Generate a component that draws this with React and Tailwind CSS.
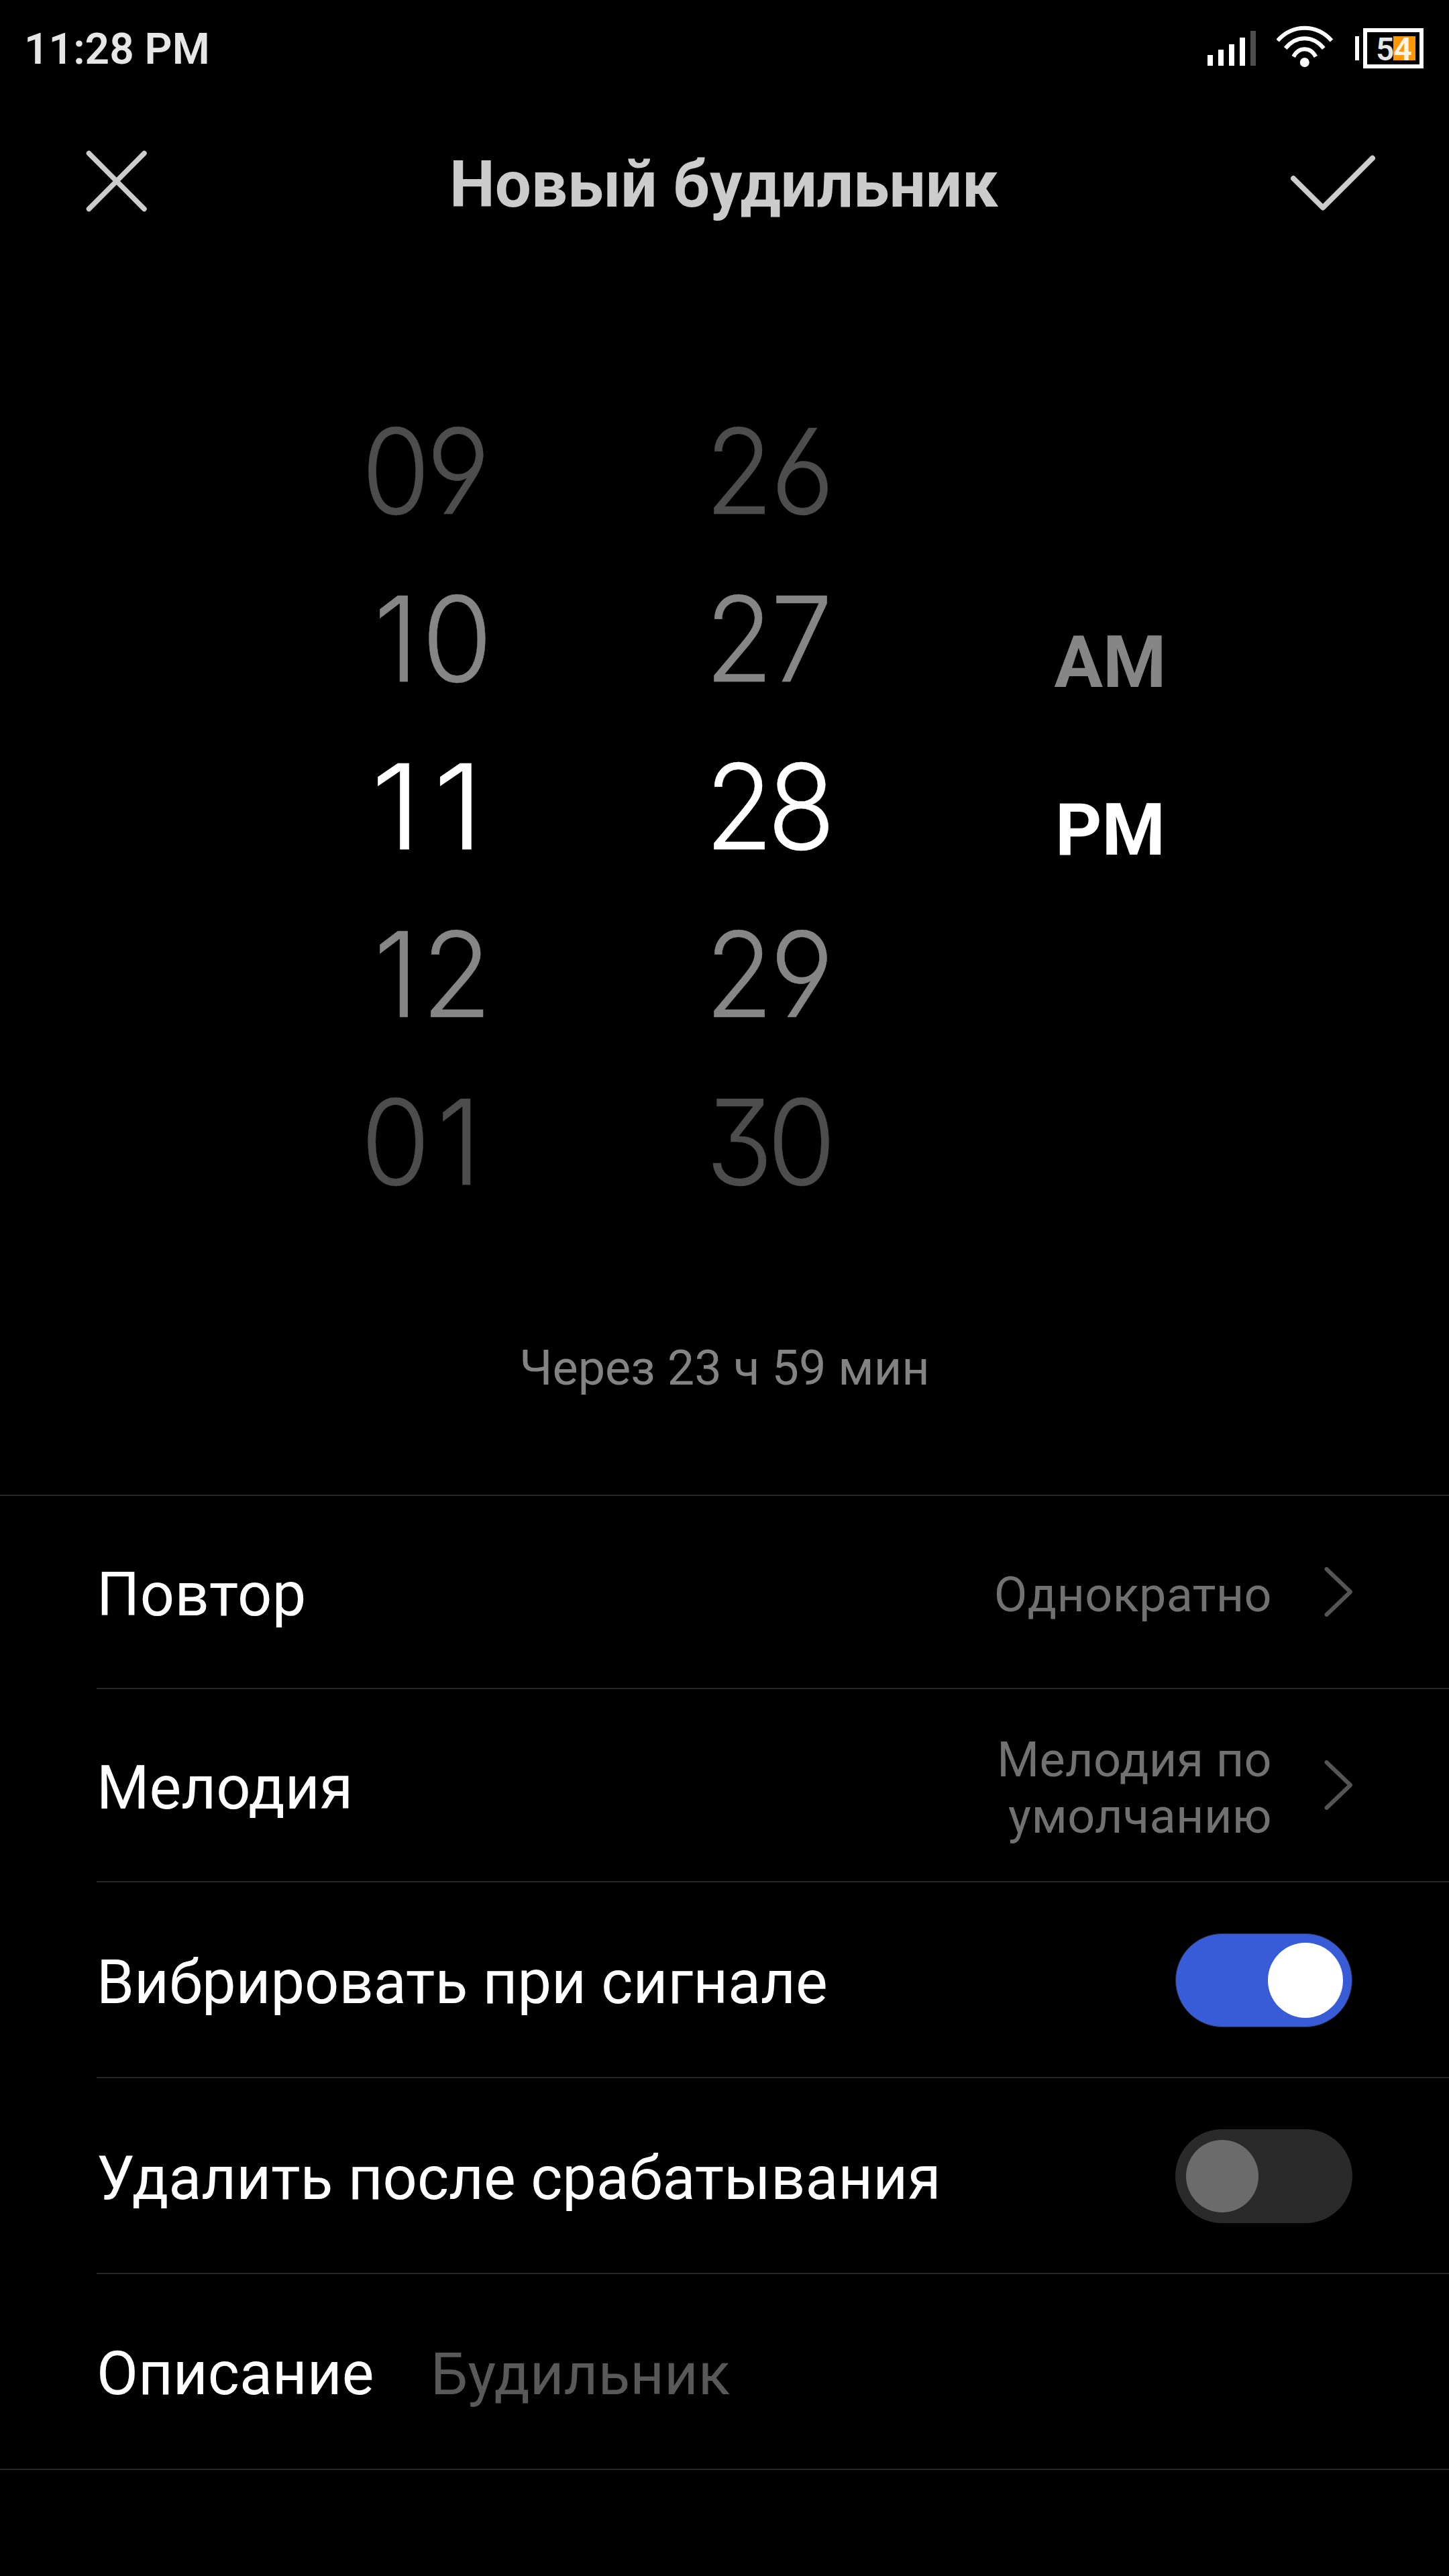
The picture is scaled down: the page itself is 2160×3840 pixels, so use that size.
// Wheel entries: value, colour by distance from the selection, and per-pair spacing.
const HOURS = [
  { value: "09", style: "text-[#4d4d4d] ml-[158.3px] scale-x-[0.94] tracking-[-6px]" },
  { value: "10", style: "text-[#868686] ml-[176px] scale-x-[0.97] tracking-[4.8px]" },
  { value: "11", style: "text-white ml-[171.5px] scale-x-[1.08] tracking-[16.6px]" },
  { value: "12", style: "text-[#868686] ml-[176px] scale-x-[0.97] tracking-[4.5px]" },
  { value: "01", style: "text-[#4d4d4d] ml-[157.2px] scale-x-[0.95] tracking-[10.4px]" },
];

const MINUTES = [
  { value: "26", style: "text-[#4d4d4d] ml-[157.7px] scale-x-[0.94] tracking-[-4px]" },
  { value: "27", style: "text-[#868686] ml-[157.7px] scale-x-[0.94] tracking-[-4px]" },
  { value: "28", style: "text-white ml-[157.7px] scale-x-[0.94] tracking-[-9px]" },
  { value: "29", style: "text-[#868686] ml-[157.7px] scale-x-[0.94] tracking-[-5px]" },
  { value: "30", style: "text-[#4d4d4d] ml-[158.6px] scale-x-[0.94] tracking-[-9.5px]" },
];

function StatusBar() {
  return (
    <div className="flex h-36 items-center justify-between pr-[38px] pl-9">
      <span className="pt-1 text-[64px] leading-none font-semibold text-[#e6e6e6]">11:28 PM</span>
      <div className="flex items-center">
        <svg className="h-36 w-[72px]" viewBox="0 0 72 144" fill="#fff">
          <rect x="0" y="82" width="8" height="16" />
          <rect x="16" y="74" width="8" height="24" />
          <rect x="32" y="66" width="8" height="32" />
          <rect x="48" y="56" width="8" height="42" />
          <rect x="64" y="46" width="8" height="52" fill="#4d4d4d" />
        </svg>
        <svg
          className="mr-[33px] ml-[31px] h-36 w-[84px]"
          viewBox="0 0 84 144"
          fill="none"
          stroke="#fff"
          strokeWidth="6"
        >
          <path d="M1.5 60.5 C24 35.5 59.5 35.5 82 60.5" />
          <path d="M13.2 72 C29.5 52.3 54 52.3 70.3 72" />
          <path d="M25.2 84.5 C33 69.5 50.5 69.5 58.3 84.5" />
          <circle cx="41.8" cy="93" r="7" fill="#fff" stroke="none" />
        </svg>
        <div className="flex items-center gap-1.5">
          <div className="h-9 w-1.5 bg-white" />
          <div className="flex h-[60px] w-[90px] items-center border-6 border-white">
            <div className="relative flex h-9 w-[72px] items-center justify-end">
              <div className="h-9 w-[33px] bg-[#ff9800]" />
              <span className="absolute top-0 left-[13px] pt-[2px] text-[48px] leading-9 font-semibold tracking-[-1px] text-white/90">
                54
              </span>
            </div>
          </div>
        </div>
      </div>
    </div>
  );
}

function Header() {
  return (
    <div className="grid h-[252px] grid-cols-[220px_1fr_236px] items-center">
      <svg
        className="ml-[128px] h-[92px] w-[92px]"
        viewBox="0 0 92 92"
        fill="none"
        stroke="#ccc"
        strokeWidth="7.5"
        strokeLinecap="round"
      >
        <path d="M4.5 4.5 L87 87.5 M87 4.5 L4.5 87.5" />
      </svg>
      <h1 className="pt-2.5 pl-[14px] text-center text-[96px] leading-none font-bold tracking-[-0.1px] text-[#ccc]">
        Новый будильник
      </h1>
      <svg
        className="h-[92px] w-[130px]"
        viewBox="0 0 130 92"
        fill="none"
        stroke="#ccc"
        strokeWidth="8"
        strokeLinecap="round"
        strokeLinejoin="round"
      >
        <path d="M4 42 L48 85.5 L122 11.7" />
      </svg>
    </div>
  );
}

function Wheel({ items }) {
  return (
    <div className="flex flex-col">
      {items.map(({ value, style }) => (
        <div key={value} className="flex h-[250px] items-center">
          <span
            className={`origin-left font-['Inter',sans-serif] text-[176px] leading-none font-light [font-kerning:none] [font-feature-settings:'ss01','cv09'] [-webkit-text-stroke:0.5px_currentColor] ${style}`}
          >
            {value}
          </span>
        </div>
      ))}
    </div>
  );
}

function Chevron() {
  return (
    <svg
      className="h-[80px] w-[120px] shrink-0 overflow-visible"
      viewBox="0 0 120 80"
      fill="none"
      stroke="#555"
      strokeWidth="6"
      strokeLinecap="round"
      strokeLinejoin="round"
    >
      <path d="M81.5 6 L117 40 L81.5 74" />
    </svg>
  );
}

function Toggle({ on }) {
  return on ? (
    <div className="mt-px flex h-[140px] w-[264px] items-center justify-end rounded-full border border-[#2b2b33] bg-[#385cd7] pr-[13px]">
      <div className="size-[112px] rounded-full bg-white" />
    </div>
  ) : (
    <div className="mt-0.5 flex h-[140px] w-[264px] items-center rounded-full bg-[#2a2a2a] pl-4">
      <div className="size-[108px] rounded-full bg-[#6b6b6b]" />
    </div>
  );
}

function Row({ label, height = "h-[292px]", tracking = "tracking-normal", children }) {
  return (
    <div className={`ml-36 flex items-center justify-between border-b-2 border-[#242424] pr-36 ${height}`}>
      <span className={`pt-[10px] text-[90px] leading-none text-white ${tracking}`}>{label}</span>
      {children}
    </div>
  );
}

function Value({ children }) {
  return (
    <div className="flex items-center">
      <span className="w-[430px] pt-[9px] text-right text-[72px] leading-[84px] tracking-[0.35px] text-[#717171]">
        {children}
      </span>
      <Chevron />
    </div>
  );
}

export default function App() {
  return (
    <div className="flex h-[3840px] w-[2160px] flex-col bg-black font-['Roboto',sans-serif]">
      <StatusBar />
      <Header />
      <div className="mt-[181px] grid h-[1250px] grid-cols-[512px_514px_496px] pl-[381px]">
        <Wheel items={HOURS} />
        <Wheel items={MINUTES} />
        <div className="flex flex-col pt-[285px] text-center text-[108px] leading-[250px] font-bold">
          <span className="text-[#868686]">AM</span>
          <span className="text-white">PM</span>
        </div>
      </div>
      <div className="flex h-[403px] items-center justify-center border-b-2 border-[#242424] pt-6 text-[72px] leading-none text-[#838383]">
        Через 23 ч 59 мин
      </div>
      <Row label="Повтор" height="h-[288px]" tracking="tracking-[0.5px]">
        <Value>Однократно</Value>
      </Row>
      <Row label="Мелодия" height="h-[288px]">
        <Value>Мелодия по умолчанию</Value>
      </Row>
      <Row label="Вибрировать при сигнале">
        <Toggle on />
      </Row>
      <Row label="Удалить после срабатывания">
        <Toggle />
      </Row>
      <div className="flex h-[292px] items-baseline border-b-2 border-[#242424] pt-[104px] pl-36 leading-none">
        <span className="w-[498px] text-[90px] text-white">Описание</span>
        <span className="text-[88px] text-[#595959]">Будильник</span>
      </div>
    </div>
  );
}
